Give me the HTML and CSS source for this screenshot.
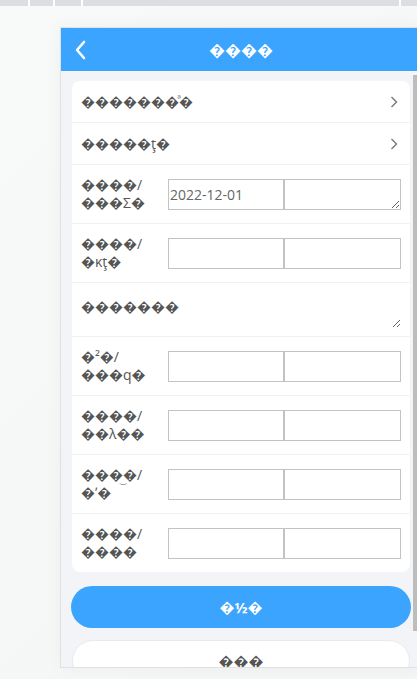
FILE: index.html
```html
<!DOCTYPE html>
<html>
<head>
<meta charset="utf-8">
<link rel="stylesheet" href="styles.css">
</head>
<body>
<div class="topbar">
  <span class="seg s1"></span><span class="seg s2"></span><span class="seg s3"></span><span class="seg s4"></span>
</div>
<div class="frame">
  <div class="header">
    <svg class="back" width="12" height="20" viewBox="0 0 12 20"><polyline points="9,2 2,10 9,18" fill="none" stroke="#fff" stroke-width="2.6" stroke-linecap="round" stroke-linejoin="round"/></svg>
    <div class="title">����</div>
  </div>
  <div class="content">
    <div class="card">
      <div class="row">
        <div class="label">�������&#x0363;�</div>
        <svg class="chev" width="8" height="12" viewBox="0 0 8 12"><polyline points="1.5,1 6.5,6 1.5,11" fill="none" stroke="#777" stroke-width="1.4"/></svg>
      </div>
      <div class="row">
        <div class="label">�����ţ�</div>
        <svg class="chev" width="8" height="12" viewBox="0 0 8 12"><polyline points="1.5,1 6.5,6 1.5,11" fill="none" stroke="#777" stroke-width="1.4"/></svg>
      </div>
      <div class="row two">
        <div class="label">����/<br>���Σ�</div>
        <div class="pair"><input class="box" value="2022-12-01"><textarea class="box tbox"></textarea></div>
      </div>
      <div class="row two">
        <div class="label">����/<br>�κţ�</div>
        <div class="pair"><input class="box"><input class="box"></div>
      </div>
      <div class="row ta">
        <textarea class="note" placeholder="�������"></textarea>
      </div>
      <div class="row two">
        <div class="label">�²�/<br>���q�</div>
        <div class="pair"><input class="box"><input class="box"></div>
      </div>
      <div class="row two">
        <div class="label">����/<br>��λ��</div>
        <div class="pair"><input class="box"><input class="box"></div>
      </div>
      <div class="row two">
        <div class="label">���<span class="mk">‿</span>�/<br>�ʼ�</div>
        <div class="pair"><input class="box"><input class="box"></div>
      </div>
      <div class="row two last">
        <div class="label">����/<br>����</div>
        <div class="pair"><input class="box"><input class="box"></div>
      </div>
    </div>
    <button class="btn primary">�½�</button>
    <button class="btn plain">���</button>
    <div class="thumb"></div>
  </div>
</div>
</body>
</html>
```
FILE: styles.css
```css
html, body {
  margin: 0;
  padding: 0;
}
body {
  width: 417px;
  height: 679px;
  overflow: hidden;
  background: linear-gradient(135deg, #f8f9f9 0%, #f4f5f5 100%);
  font-family: "Open Sans", "DejaVu Sans", sans-serif;
  color: #555;
}
.topbar {
  display: grid;
  grid-template-columns: 28px 2px 23px 2px 26px 2px 316px 2px 1fr;
  height: 6px;
  background: #dcdee3;
}
.topbar .seg { display: block; background: #fff; }
.topbar .s1 { grid-column: 2; }
.topbar .s2 { grid-column: 4; }
.topbar .s3 { grid-column: 6; }
.topbar .s4 { grid-column: 8; }

.frame {
  margin: 21px 0 0 60px;
  width: 362px;
  height: 641px;
  box-sizing: border-box;
  border: 1px solid #e0e1e2;
  background: #f3f4f7;
  display: flex;
  flex-direction: column;
  box-shadow: 0 0 18px rgba(0, 0, 0, 0.04);
}
.header {
  position: relative;
  height: 43px;
  flex: none;
  background: #3ba4fe;
  display: flex;
  align-items: center;
  justify-content: center;
}
.back {
  position: absolute;
  left: 14px;
  top: 12px;
}
.title {
  color: #fff;
  font-size: 16px;
  font-weight: bold;
}
.content {
  position: relative;
  flex: 1;
  overflow: hidden;
  padding-top: 10px;
}
.card {
  margin-left: 11px;
  width: 338px;
  background: #fff;
  border-radius: 8px;
}
.row {
  box-sizing: border-box;
  height: 42px;
  display: flex;
  align-items: center;
  justify-content: space-between;
  padding: 0 9px;
  border-bottom: 1px solid #f2f2f3;
}
.row.two { height: 59px; }
.row.ta { height: 54px; }
.row.last { border-bottom: none; height: 58px; }
.label {
  font-size: 14px;
  line-height: 18px;
  color: #555;
}
.mk {
  display: inline-block;
  width: 0;
  font-size: 8px;
  line-height: 0;
  transform: translate(-3px, 3px);
}
.chev { margin-right: 3px; }
.pair {
  display: flex;
}
.box {
  box-sizing: border-box;
  width: 116px;
  height: 31px;
  margin: 0;
  border: 1px solid #c3c3c3;
  border-radius: 0;
  padding: 1px;
  font-family: "Open Sans", "DejaVu Sans", sans-serif;
  font-size: 14px;
  color: #666;
  background: #fff;
  outline: none;
}
.box + .box { width: 117px; }
.tbox {
  resize: both;
  display: block;
}
.note {
  box-sizing: border-box;
  width: 320px;
  height: 30px;
  margin-top: 6px;
  border: none;
  padding: 0;
  font-family: "Open Sans", "DejaVu Sans", sans-serif;
  font-size: 14px;
  line-height: 18px;
  outline: none;
  resize: both;
}
.note::placeholder { color: #555; }
.btn {
  display: block;
  box-sizing: border-box;
  height: 42px;
  border-radius: 21px;
  font-family: "Open Sans", "DejaVu Sans", sans-serif;
  font-size: 15px;
  font-weight: bold;
  padding: 0;
}
.btn.primary {
  margin: 14px 0 0 10px;
  width: 340px;
  border: none;
  background: #3ba4fe;
  color: #fff;
}
.btn.plain {
  margin: 12px 0 0 11px;
  width: 338px;
  border: 1px solid #eaeaea;
  background: #fff;
  color: #555;
}
.thumb {
  position: absolute;
  right: 0;
  top: 4px;
  width: 8px;
  height: 556px;
  background: #bdbdbd;
}
```
